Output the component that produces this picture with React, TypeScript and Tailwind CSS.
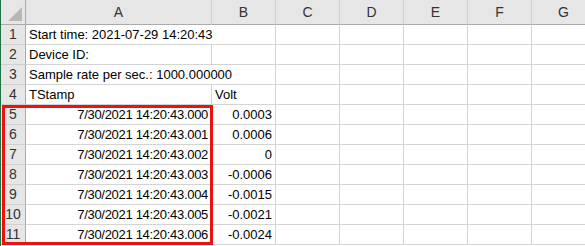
import { Fragment } from 'react';

const cols = ['A', 'B', 'C', 'D', 'E', 'F', 'G'];

type Row = { a: string; b?: string; date?: boolean; over?: boolean };

const rows: Row[] = [
  { a: 'Start time: 2021-07-29 14:20:43', over: true },
  { a: 'Device ID:' },
  { a: 'Sample rate per sec.: 1000.000000', over: true },
  { a: 'TStamp', b: 'Volt' },
  { a: '7/30/2021 14:20:43.000', b: '0.0003', date: true },
  { a: '7/30/2021 14:20:43.001', b: '0.0006', date: true },
  { a: '7/30/2021 14:20:43.002', b: '0', date: true },
  { a: '7/30/2021 14:20:43.003', b: '-0.0006', date: true },
  { a: '7/30/2021 14:20:43.004', b: '-0.0015', date: true },
  { a: '7/30/2021 14:20:43.005', b: '-0.0021', date: true },
  { a: '7/30/2021 14:20:43.006', b: '-0.0024', date: true },
];

export default function App() {
  return (
    <div
      className="relative w-[585px] h-[246px] overflow-hidden bg-white border-l border-[#217346] text-[13px] text-black"
      style={{ fontFamily: '"Liberation Sans", Arial, sans-serif' }}
    >
      <div className="grid grid-cols-[25px_186px_64px_64px_64px_64px_64px_64px] grid-rows-[25px_repeat(11,20px)]">
        {/* corner */}
        <div className="relative bg-[#e6e6e6] border-b border-r border-[#ababab]">
          <div className="absolute right-[3px] bottom-[3px] w-0 h-0 border-l-[14px] border-l-transparent border-b-[14px] border-b-[#b7b7b7]" />
        </div>
        {cols.map((c) => (
          <div
            key={c}
            className="bg-[#e6e6e6] border-b border-r border-b-[#ababab] border-r-[#d0d0d0] flex items-center justify-center text-[#333] text-[14px]"
          >
            {c}
          </div>
        ))}

        {rows.map((r, i) => (
          <Fragment key={i}>
            <div className="bg-[#e6e6e6] border-b border-r border-b-[#d0d0d0] border-r-[#ababab] flex items-center justify-center text-[#333] text-[14px]">
              {i + 1}
            </div>
            <div
              className={`border-b border-[#d4d4d4] flex items-center whitespace-nowrap ${
                r.over ? 'overflow-visible relative z-10' : 'border-r'
              } ${r.date ? 'justify-end pr-[3px] tracking-[-0.3px]' : 'pl-[3px]'}`}
            >
              {r.a}
            </div>
            <div
              className={`border-b border-r border-[#d4d4d4] flex items-center whitespace-nowrap ${
                r.date ? 'justify-end pr-[3px]' : 'pl-[3px]'
              }`}
            >
              {r.b ?? ''}
            </div>
            {['C', 'D', 'E', 'F', 'G'].map((c) => (
              <div key={c} className="border-b border-r border-[#d4d4d4]" />
            ))}
          </Fragment>
        ))}
      </div>

      {/* highlight box */}
      <div className="absolute left-[1px] top-[105px] w-[211px] h-[140px] border-[3px] border-[#ee1111] pointer-events-none" />
    </div>
  );
}
